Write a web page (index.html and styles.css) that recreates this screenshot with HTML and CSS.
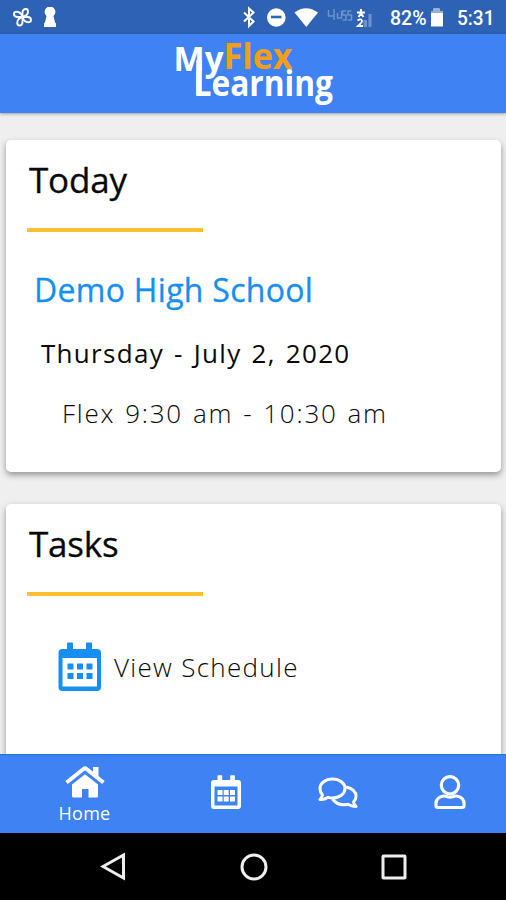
FILE: index.html
```html
<!DOCTYPE html>
<html lang="en">
<head>
<meta charset="utf-8">
<title>MyFlexLearning</title>
<link rel="stylesheet" href="styles.css">
</head>
<body>
<div class="status">
  <svg width="506" height="34" viewBox="0 0 506 34" fill="none" stroke="#fff">
    <g stroke-width="1.900">
      <path d="M22.500 17v-4.500q0-3.500 3.500-3.500 2 0 2 2.500 0 4-5.500 5.500z"/>
      <path d="M22.500 17h5q3.500 0 3.500 3 0 2.200-2.500 2.200-4.500 0-6-5.200z"/>
      <path d="M22.500 17v5q0 3.500-3 3.500-2.200 0-2.200-2.500 0-4.500 5.200-6z"/>
      <path d="M22.500 17h-5q-3.500 0-3.500-3 0-2.200 2.500-2.200 4.500 0 6 5.200z"/>
    </g>
    <path d="M47.500 7h5q3 2 3 4.500t-2 4.500l1.500 6.500 1 1V27H44v-3.500l1-1 1.500-6.500q-2-2-2-4.500t3-4.500z" fill="#fff" stroke="none"/>
    <path d="M244 12.500l9.500 9-4.500 4.500V8.500l4.500 4-9.500 9" stroke-width="2"/>
    <circle cx="276.300" cy="17.500" r="9.300" fill="#fff" stroke="none"/>
    <path d="M271 17h10.500" stroke="#2e62b5" stroke-width="2.600"/>
    <path d="M294.500 12.500q11.500-8.500 23.500 0L306.300 27z" fill="#fff" stroke="none"/>
    <g stroke="#6d92cd" stroke-width="1.500"><path d="M328.500 10v6h6M334 9v11M337.500 13v5h4v-7M346 11h-3.500v4h3.500v5h-3.500M351.500 11h-3.500v4h3.500v5h-3.500"/></g>
    <path d="M368.500 14h3v13h-3zM363.500 20h3.500v7h-3.500z" fill="#6d92cd" stroke="none"/>
    <path d="M357 12.500h8M361 9v5M358.500 17l2.500-3.500 2.500 3.500" stroke-width="2"/>
    <path d="M357.500 20.500q4-2.500 4.500.500 0 1.500-4 5h5" stroke-width="1.800"/>
    <path d="M431 11h2.500V8.500h6V11h3.500v15.500h-12z" fill="#fff" stroke="none"/>
    <path d="M431 11h2.500V8.500h6V11h3.500v2h-12z" fill="#98afd6" stroke="none"/>
    <g class="status-text"><text x="390" y="25.200" textLength="36.500" lengthAdjust="spacingAndGlyphs">82%</text><text x="457" y="25.200" textLength="37.500" lengthAdjust="spacingAndGlyphs">5:31</text></g>
  </svg>
</div>
<header class="header">
  <svg class="logo" width="170" height="72" viewBox="168 38 170 72">
    <text class="logo-white" x="173.500" y="71" font-size="34" textLength="50" lengthAdjust="spacingAndGlyphs">My</text>
    <path d="M199 60v35" stroke="#fff" stroke-width="5.500"/>
    <text class="logo-orange" x="223.500" y="69.300" font-size="35" textLength="69" lengthAdjust="spacingAndGlyphs">Flex</text>
    <text class="logo-white" x="193.500" y="95.500" font-size="35" textLength="139.500" lengthAdjust="spacingAndGlyphs">Learning</text>
  </svg>
</header>
<main class="content">
  <section class="card card-today">
    <h1 class="title">Today</h1>
    <h2 class="school">Demo High School</h2>
    <p class="date">Thursday - July 2, 2020</p>
    <p class="slot">Flex 9:30 am - 10:30 am</p>
  </section>
  <section class="card card-tasks">
    <h1 class="title">Tasks</h1>
    <div class="task">
      <svg width="44" height="50" viewBox="0 0 44 50">
        <path fill="#168ef2" fill-rule="evenodd" d="M4 7h5V1.500q0-1 1-1h4q1 0 1 1V7h13V1.500q0-1 1-1h4q1 0 1 1V7h5q4 0 4 4v34q0 4-4 4H4.500q-4 0-4-4V11q0-4 3.500-4zM4.500 16v28.500h34.500V16z"/>
        <path fill="#168ef2" d="M9.500 21.500h6v6h-6zM19 21.500h6v6h-6zM28.500 21.500h6v6h-6zM9.500 31h6v6h-6zM19 31h6v6h-6zM28.500 31h6v6h-6z"/>
      </svg>
      <span class="task-label">View Schedule</span>
    </div>
  </section>
</main>
<nav class="tabs">
  <a class="tab tab-home">
    <svg width="40" height="34" viewBox="0 0 40 34"><path fill="#fff" d="M20 9.300L33 19.500V31q0 1.500-1.500 1.500H23.500V24h-6.500v8.500H8.500Q7 32.500 7 31V19.500z"/><path d="M1.500 17.500L18.500 4q1.500-1.200 3 0L38.500 17.500" fill="none" stroke="#fff" stroke-width="4"/><path fill="#fff" d="M28 2h5.500v12L28 9z"/></svg>
    <span class="tab-label">Home</span>
  </a>
  <a class="tab tab-calendar">
    <svg width="32" height="35" viewBox="0 0 32 35"><path fill="#fff" fill-rule="evenodd" d="M4 5h3.500V1q0-.700.700-.700h3.200q.800 0 .800.700v4h8V1q0-.700.700-.700h3.200q.800 0 .800.700v4H28q3 0 3 3v23q0 3-3 3H4q-3 0-3-3V8q0-3 3-3zM4.500 11.500v19h23v-19z"/><path fill="#fff" d="M7.500 15h5v5h-5zM13.700 15h5v5h-5zM20 15h5v5h-5zM7.500 21.500h5v5h-5zM13.700 21.500h5v5h-5zM20 21.500h5v5h-5z"/></svg>
  </a>
  <a class="tab tab-chat">
    <svg width="40" height="32" viewBox="0 0 40 32" fill="none" stroke="#fff" stroke-width="3" stroke-linejoin="round"><path d="M14.500 2C7.500 2 2 6.200 2 11.500q0 3.800 2.500 6.500Q4 20.500 2 22.500q4 .500 8-2.200 2 .700 4.500.700C21.500 21 27 16.800 27 11.500S21.500 2 14.500 2z"/><path d="M28 10q10 2 10 9.500 0 3-2.500 5.500.500 2.500 2.500 4.500-4 .300-8-2.200-10 2.200-15.500-5.300"/></svg>
  </a>
  <a class="tab tab-user">
    <svg width="32" height="36" viewBox="0 0 32 36" fill="none" stroke="#fff" stroke-width="3.200"><circle cx="16" cy="10.300" r="8.700"/><path d="M8.500 21.200q2-.500 4 .300 3.500 1.200 7 0 2-.800 4-.300Q30 22.700 30 28.700v1.800q0 2-2 2H4q-2 0-2-2v-1.800q0-6 6.500-7.500z"/></svg>
  </a>
</nav>
<footer class="system">
  <svg width="27" height="29" viewBox="0 0 27 29"><path d="M3 14.500L23.500 3v23z"/></svg>
  <svg width="30" height="30" viewBox="0 0 30 30"><circle cx="15" cy="15" r="12"/></svg>
  <svg width="26" height="26" viewBox="0 0 26 26"><rect x="2" y="2" width="22" height="22" rx=".5"/></svg>
</footer>
</body>
</html>
```
FILE: styles.css
```css
* { box-sizing: border-box; }
body {
  margin: 0;
  width: 506px;
  height: 900px;
  overflow: hidden;
  display: flex;
  flex-direction: column;
  background: #efefef;
  color: #090909;
  font-family: "Open Sans", "Noto Sans", sans-serif;
}
svg { display: block; flex: none; }
h1, h2, p { margin: 0; font-weight: 400; white-space: nowrap; }
.status { height: 34px; flex: none; background: #2e62b5; }
.status-text { font: 500 20px Roboto, sans-serif; fill: #fff; stroke: none; }
.header {
  height: 79px;
  flex: none;
  padding: 4px 0 0 168px;
  background: #3f82f3;
  box-shadow: 0 1px 3px rgba(0, 0, 0, .35);
}
.logo { font-family: "Open Sans", sans-serif; font-weight: 700; overflow: visible; }
.logo-white { fill: #fff; }
.logo-orange { fill: #f59d18; }
.content {
  height: 641px;
  flex: none;
  overflow: hidden;
  padding: 27px 5px 0 6px;
  display: flex;
  flex-direction: column;
  gap: 32px;
}
.card {
  flex: none;
  background: #fff;
  border-radius: 5px;
  box-shadow: 0 3px 6px rgba(0, 0, 0, .38);
}
.card-today { height: 332px; }
.card-tasks { height: 300px; }
.title {
  width: 176px;
  height: 92px;
  margin-left: 21px;
  padding: 14px 0 0 2px;
  border-bottom: 4px solid #fbc02d;
  font-size: 35px;
  line-height: 52px;
  letter-spacing: -.2px;
  -webkit-text-stroke: .3px;
}
.school {
  margin: 31px 0 0 28px;
  height: 54px;
  font-size: 32px;
  line-height: 54px;
  letter-spacing: .3px;
  color: #168ef2;
  -webkit-text-stroke: .3px;
}
.date {
  margin: 13px 0 0 35px;
  font-size: 26px;
  line-height: 46px;
  font-weight: 500;
  letter-spacing: 1.3px;
  word-spacing: 2px;
}
.slot {
  margin: 14px 0 0 56px;
  font-size: 26px;
  line-height: 46px;
  font-weight: 300;
  letter-spacing: 1.75px;
  word-spacing: 1.5px;
}
.task { display: flex; align-items: center; margin: 46px 0 0 52px; height: 50px; gap: 12px; }
.task-label { font-size: 26px; font-weight: 300; letter-spacing: 1.3px; white-space: nowrap; }
.tabs {
  height: 79px;
  flex: none;
  display: grid;
  grid-template-columns: 169px 113px 112px 112px;
  background: #3f82f3;
  border-top: 1px solid #1976d8;
}
.tab { display: flex; flex-direction: column; align-items: center; }
.tab-home { padding-top: 10px; }
.tab-calendar { padding-top: 20px; }
.tab-chat { padding-top: 22px; }
.tab-user { padding-top: 20px; }
.tab-label { font-size: 18px; line-height: 29px; letter-spacing: .3px; color: #fff; }
.system {
  height: 67px;
  flex: none;
  display: flex;
  align-items: center;
  justify-content: center;
  gap: 112px;
  background: #000;
}
.system svg { fill: none; stroke: #eee; stroke-width: 3; }
```
